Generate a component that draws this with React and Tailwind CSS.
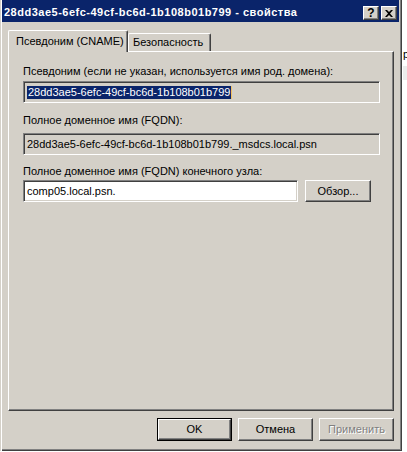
import React from 'react';

// Win2000-style properties dialog for a CNAME record
const raised = 'border-t border-l border-t-white border-l-white border-r border-b border-r-[#404040] border-b-[#404040] shadow-[inset_-1px_-1px_0_#808080]';
const sunken = 'border-t border-l border-t-[#808080] border-l-[#808080] border-r border-b border-r-white border-b-white shadow-[inset_1px_1px_0_#404040,inset_-1px_-1px_0_#d4d0c8]';

const Field = ({ children, className = '' }) => (
  <div className={`h-[22px] flex items-center pl-[3px] ${sunken} ${className}`}>{children}</div>
);

const Button = ({ children, isDefault, disabled, className = '' }) => {
  if (isDefault) {
    return (
      <div className={`border border-black ${className}`}>
        <div className={`h-full flex items-center justify-center ${raised}`}>{children}</div>
      </div>
    );
  }
  return (
    <div className={`flex items-center justify-center ${raised} ${className}`}>
      <span className={disabled ? 'text-[#808080] [text-shadow:1px_1px_0_#fff]' : ''}>{children}</span>
    </div>
  );
};

const TitleButton = ({ children }) => (
  <div className={`w-[16px] h-[14px] bg-[#d4d0c8] flex items-center justify-center text-black ${raised}`}>{children}</div>
);

export default function App() {
  return (
    <div className="relative w-[407px] h-[452px] bg-white overflow-hidden text-[11px] leading-[13px] text-black font-['Liberation_Sans',sans-serif]">
      {/* bits of whatever sits behind the dialog */}
      <div className="absolute left-[403px] top-[48px] text-[11px]">p</div>
      <div className="absolute left-[403px] top-[66px] w-[4px] h-[14px] bg-[#ececec]" />

      <div className="w-[402px] h-[451px] bg-[#d4d0c8] shadow-[inset_1px_0_0_#d4d0c8,inset_2px_0_0_#fff,inset_-1px_-1px_0_#404040,inset_-2px_-2px_0_#808080]">
        <div className="ml-[2px] w-[397px] h-[22px] bg-[#0a246a] flex items-center pl-[2px] pr-[2px] pt-[3px]">
          <span className="flex-1 text-white font-bold text-[11px] tracking-[0.5px]">28dd3ae5-6efc-49cf-bc6d-1b108b01b799 - свойства</span>
          <div className="flex gap-[2px] mt-[1px]">
            <TitleButton>
              <span className="font-bold text-[12px] leading-none">?</span>
            </TitleButton>
            <TitleButton>
              <svg width="8" height="7" viewBox="0 0 8 7">
                <path d="M0 0h2l2 2 2-2h2L5 3.5 8 7H6L4 5 2 7H0l3-3.5z" fill="#000" />
              </svg>
            </TitleButton>
          </div>
        </div>

        <div className="ml-[8px] mt-[8px] h-[21px] flex items-end">
          <div className="relative z-10 w-[120px] h-[22px] -mb-[1px] bg-[#d4d0c8] rounded-t-[2px] border-t border-l border-white border-r border-r-[#404040] shadow-[inset_-1px_0_0_#808080] flex items-center pl-[7px] pb-[1px]">
            Псевдоним (CNAME)
          </div>
          <div className="w-[83px] h-[18px] rounded-t-[2px] border-t border-l border-white border-r border-r-[#404040] shadow-[inset_-1px_0_0_#808080] flex items-center pl-[4px]">
            Безопасность
          </div>
        </div>

        <div className="ml-[8px] w-[386px] h-[360px] border-t border-l border-white border-r border-b border-r-[#404040] border-b-[#404040] shadow-[inset_-1px_-1px_0_#808080] pl-[14px] pt-[13px]">
          <div>Псевдоним (если не указан, используется имя род. домена):</div>
          <Field className="mt-[3px] w-[357px] bg-[#d4d0c8]">
            <span className="bg-[#0a246a] text-white px-[1px]">28dd3ae5-6efc-49cf-bc6d-1b108b01b799</span>
            <span className="w-[1px] h-[13px] bg-[#f0c060]" />
          </Field>

          <div className="mt-[11px]">Полное доменное имя (FQDN):</div>
          <Field className="mt-[6px] w-[357px] bg-[#d4d0c8]">
            28dd3ae5-6efc-49cf-bc6d-1b108b01b799._msdcs.local.psn
          </Field>

          <div className="mt-[10px]">Полное доменное имя (FQDN) конечного узла:</div>
          <div className="mt-[2px] flex gap-[7px]">
            <Field className="w-[275px] bg-white">comp05.local.psn.</Field>
            <Button className="w-[66px] h-[22px]">Обзор...</Button>
          </div>
        </div>

        <div className="mt-[7px] pr-[8px] flex justify-end gap-[6px]">
          <Button isDefault className="w-[75px] h-[23px]">OK</Button>
          <Button className="w-[75px] h-[23px]">Отмена</Button>
          <Button disabled className="w-[75px] h-[23px]">Применить</Button>
        </div>
      </div>
    </div>
  );
}
